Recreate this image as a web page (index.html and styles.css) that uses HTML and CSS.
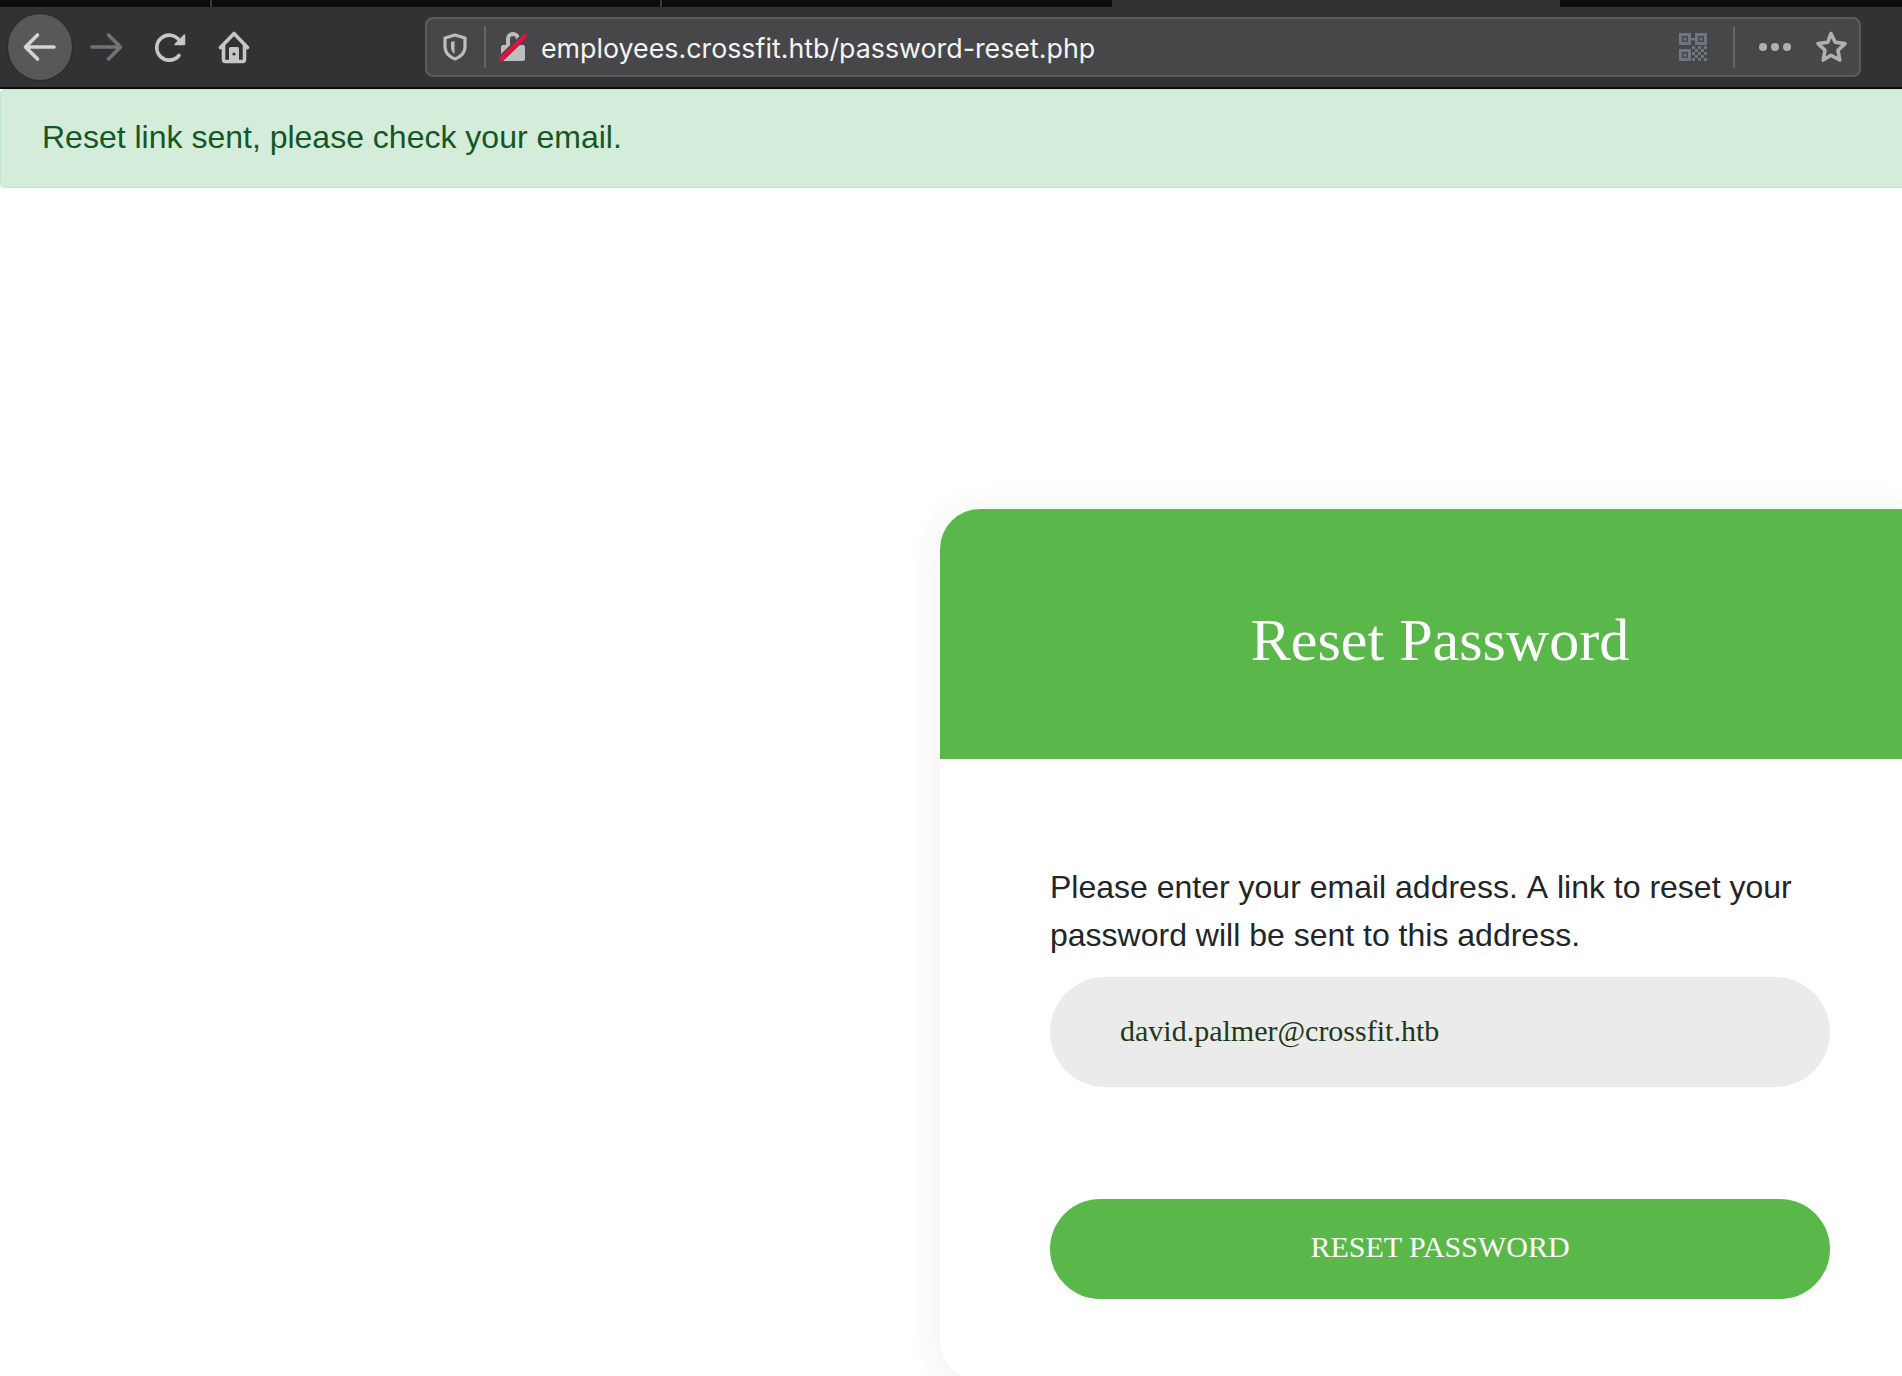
FILE: index.html

```html
<!DOCTYPE html>
<html lang="en">
<head>
  <meta charset="UTF-8">
  <meta name="viewport" content="width=device-width, initial-scale=1.0">
  <title>Reset Password</title>
  <link rel="stylesheet" href="styles.css">
</head>
<body>
  <!-- browser chrome -->
  <div class="tabstrip">
    <div class="tab tab-first"></div>
    <div class="tab tab-second"></div>
    <div class="tab tab-third"></div>
    <div class="tab-active"></div>
    <div class="tab tab-last"></div>
  </div>
  <div class="toolbar">
    <div class="nav">
      <button class="nav-btn back">
        <svg width="36" height="36" viewBox="0 0 36 36"><path d="M32 18H4M15.500 6 3.500 18l12 12" fill="none" stroke="#d4d4d6" stroke-width="3.600" stroke-linecap="round" stroke-linejoin="round"/></svg>
      </button>
      <button class="nav-btn forward">
        <svg width="36" height="36" viewBox="0 0 36 36"><path d="M4 18h28M20.500 6l12 12-12 12" fill="none" stroke="#727275" stroke-width="3.600" stroke-linecap="round" stroke-linejoin="round"/></svg>
      </button>
      <button class="nav-btn reload">
        <svg width="32" height="32" viewBox="0 0 32 32"><path d="M25 24.500A12.500 12.500 0 1 1 25.500 9.500" fill="none" stroke="#c6c6c8" stroke-width="3.600" stroke-linecap="round"/><path d="M30.500 4v9.500H21z" fill="#c6c6c8" stroke="#c6c6c8" stroke-width="1.500" stroke-linejoin="round"/></svg>
      </button>
      <button class="nav-btn home">
        <svg width="32" height="34" viewBox="0 0 32 34"><path d="M2.500 17.500 16 3.500l13.500 14M5.500 15v14.500a2 2 0 0 0 2 2h17a2 2 0 0 0 2-2V15" fill="none" stroke="#c6c6c8" stroke-width="3.600" stroke-linecap="round" stroke-linejoin="round"/><path d="M11 32V18.500a1.500 1.500 0 0 1 1.500-1.500h7a1.500 1.500 0 0 1 1.500 1.500V32z" fill="#c6c6c8"/><circle cx="16" cy="24" r="1.600" fill="#38383a"/></svg>
      </button>
    </div>
    <div class="urlbar">
      <svg class="shield" width="24" height="28" viewBox="0 0 24 28"><path d="M12 2 22 5v9c0 6-5 10-10 12C7 24 2 20 2 14V5z" fill="none" stroke="#bdbdbf" stroke-width="3.200" stroke-linejoin="round"/><path d="M11.500 8v13c-2.500-2-3.500-4-3.500-7V9z" fill="#bdbdbf"/></svg>
      <span class="url-divider"></span>
      <svg class="lock" width="28" height="30" viewBox="0 0 28 30"><path d="M9 14V7a5 5 0 0 1 10 0v7" fill="none" stroke="#bdbdbf" stroke-width="4"/><rect x="2" y="13" width="24" height="16" rx="2" fill="#bdbdbf"/><path d="M1.500 27 26.500 3" stroke="#474749" stroke-width="6.500"/><path d="M2 27 26 4" stroke="#e5103f" stroke-width="4.400" stroke-linecap="round"/></svg>
      <span class="url-text">employees.crossfit.htb/password-reset.php</span>
      <svg class="qr" width="30" height="30" viewBox="0 0 30 30" fill="#6d7580">
        <path fill-rule="evenodd" d="M1 1h12v12H1zM4 4v6h6V4zM17 1h12v12H17zM20 4v6h6V4zM1 17h12v12H1zM4 20v6h6v-6z"/>
        <path d="M5.500 5.500h3v3h-3zM21.500 5.500h3v3h-3zM5.500 21.500h3v3h-3zM13 6h4v2.500h-4zM14 14h3v3h-3zM20 14h3v3h-3zM26 14h3v3h-3zM17 17h3v3h-3zM23 17h3v3h-3zM14 20h3v3h-3zM20 20h3v3h-3zM26 20h3v3h-3zM17 23h3v3h-3zM23 23h3v3h-3zM14 26h3v3h-3zM20 26h3v3h-3zM26 26h3v3h-3z"/>
      </svg>
      <span class="url-divider right"></span>
      <span class="dots"><i></i><i></i><i></i></span>
      <svg class="star" width="34" height="34" viewBox="0 0 34 34"><path d="m17 3.500 4.300 8.800 9.700 1.300-7 6.700 1.800 9.700L17 25.300 9.200 30l1.800-9.700-7-6.700 9.700-1.300z" fill="none" stroke="#b0b0b2" stroke-width="3.600" stroke-linejoin="round"/></svg>
    </div>
  </div>
  <div class="toolbar-line"></div>

  <!-- page -->
  <div class="alert">Reset link sent, please check your email.</div>
  <main class="page">
    <div class="card">
      <div class="card-head">
        <h1>Reset Password</h1>
      </div>
      <form class="card-body" onsubmit="return false">
        <p>Please enter your email address. A link to reset your password will be sent to this address.</p>
        <input class="email" type="text" value="david.palmer@crossfit.htb">
        <button class="submit">RESET PASSWORD</button>
      </form>
    </div>
  </main>
</body>
</html>
```

FILE: styles.css

```css
body, html {
  margin: 0;
  padding: 0;
  width: 100%;
  height: 100%;
  overflow: hidden;
  background: #fff;
  font-family: "Liberation Sans", Arial, sans-serif;
}

/* Browser chrome */
.tabstrip {
  display: flex;
  height: 7px;
  background: #0c0c0e;
}

.tab {
  border-right: 2px solid #38383a;
  box-sizing: border-box;
}

.tab-first {
  width: 212px;
}

.tab-second {
  width: 450px;
}

.tab-third {
  width: 450px;
  border-right: none;
}

.tab-active {
  width: 448px;
  background: #323234;
}

.tab-last {
  flex: 1;
  border-right: none;
}

.toolbar {
  display: flex;
  align-items: center;
  height: 80px;
  padding: 0 41px 0 8px;
  background: #323234;
}

.toolbar-line {
  height: 2px;
  background: #0c0c0e;
}

.nav {
  display: flex;
  flex: none;
  align-items: center;
  width: 417px;
}

.nav-btn {
  display: flex;
  flex: none;
  align-items: center;
  justify-content: center;
  width: 64px;
  padding: 0;
  border: none;
  background: none;
}

.back {
  height: 66px;
  border-radius: 50%;
  background: #58585a;
  box-shadow: 0 0 0 1px #2a2a2c;
}

.forward {
  margin-left: 2px;
}

.urlbar {
  display: flex;
  flex: 1;
  align-items: center;
  height: 60px;
  box-sizing: border-box;
  padding: 0 11px 0 16px;
  background: #474749;
  border: 2px solid #5c5c5e;
  border-radius: 8px;
}

.url-divider {
  flex: none;
  width: 2px;
  height: 42px;
  margin: 0 13px 0 17px;
  background: #636366;
}

.url-divider.right {
  margin: 0 24px 0 25px;
}

.url-text {
  flex: 1;
  margin-left: 14px;
  padding-top: 2px;
  color: #f4f4f5;
  font-family: Inter, "Liberation Sans", sans-serif;
  font-size: 26.800px;
}

.dots {
  display: flex;
  gap: 4px;
  margin-right: 23px;
}

.dots i {
  width: 8px;
  height: 8px;
  border-radius: 50%;
  background: #b0b0b2;
}

/* Page */
.alert {
  height: 99px;
  box-sizing: border-box;
  margin-right: -10px;
  padding: 0 41px;
  line-height: 95px;
  color: #155724;
  background: #d4edda;
  border: 1px solid #c3e6cb;
  border-radius: 5px;
  font-size: 32px;
}

.page {
  padding-top: 321px;
}

.card {
  width: 1000px;
  margin-left: 940px;
  background: #fff;
  border-radius: 40px;
  box-shadow: 0 4px 40px rgba(0, 0, 0, 0.07);
}

.card-head {
  display: flex;
  align-items: center;
  justify-content: center;
  height: 250px;
  box-sizing: border-box;
  padding-top: 12px;
  background: #59b849;
  border-radius: 40px 40px 0 0;
}

.card-head h1 {
  margin: 0;
  color: #fff;
  font: 400 60px "Liberation Serif", "Times New Roman", serif;
}

.card-body {
  width: 780px;
  padding: 104px 0 81px 110px;
}

.card-body p {
  margin: 0 0 18px;
  color: #212529;
  font-size: 32px;
  line-height: 48px;
  font-kerning: none;
}

.email {
  display: block;
  width: 100%;
  height: 110px;
  box-sizing: border-box;
  padding: 0 70px 2px;
  border: none;
  border-radius: 55px;
  background: #ebebeb;
  color: #1c3a18;
  font: 30px "Liberation Serif", "Times New Roman", serif;
}

.submit {
  display: block;
  width: 100%;
  height: 100px;
  margin-top: 112px;
  padding: 0 0 4px;
  border: none;
  border-radius: 50px;
  background: #59b849;
  color: #fff;
  font: 30px "Liberation Serif", "Times New Roman", serif;
}
```
